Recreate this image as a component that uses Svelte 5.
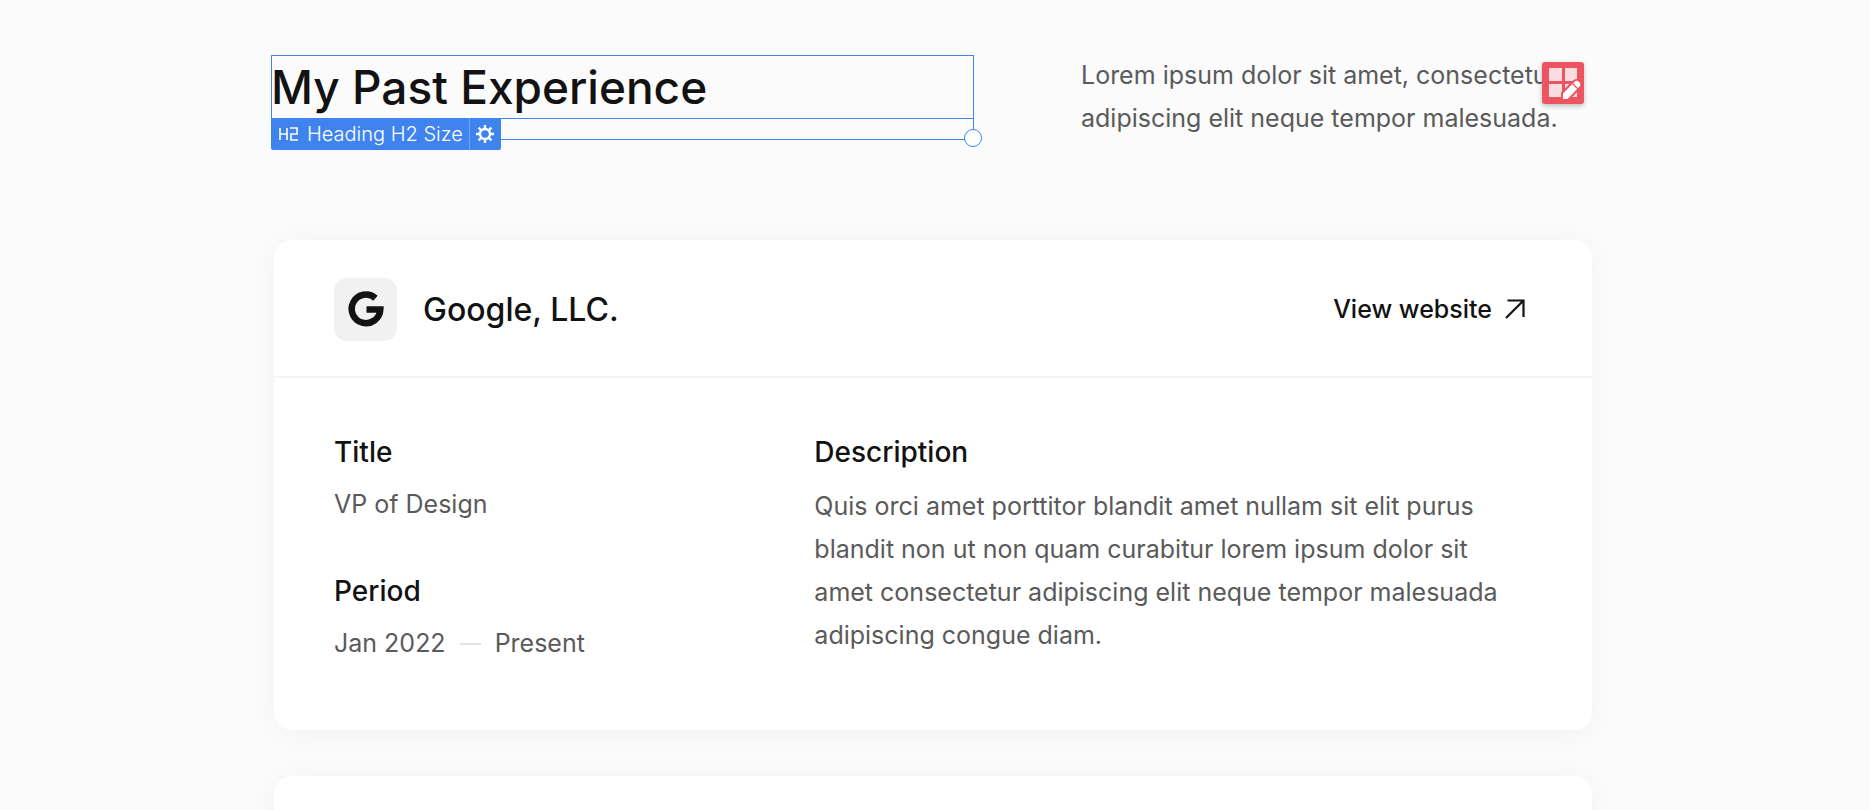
<script lang="ts">
  interface Job {
    company: string;
    title: string;
    from: string;
    to: string;
    description: string;
  }

  const jobs: Job[] = [
    {
      company: 'Google, LLC.',
      title: 'VP of Design',
      from: 'Jan 2022',
      to: 'Present',
      description:
        'Quis orci amet porttitor blandit amet nullam sit elit purus blandit non ut non quam curabitur lorem ipsum dolor sit amet consectetur adipiscing elit neque tempor malesuada adipiscing congue diam.',
    },
  ];
</script>

<main class="page">
  <header class="intro">
    <div class="selected">
      <h2>My Past Experience</h2>
      <div class="margin-outline"><span class="handle"></span></div>
      <div class="element-label">
        <span class="element-name">
          <svg width="20" height="14" viewBox="0 0 20 14" aria-hidden="true">
            <path d="M1 1v12M8 1v12M1 7h7M11 1h7v6h-6v6h7" />
          </svg>
          Heading H2 Size
        </span>
        <button class="settings" aria-label="Element settings">
          <svg width="20" height="20" viewBox="0 0 20 20" aria-hidden="true">
            <circle cx="10" cy="10" r="5" fill="none" stroke="#fff" stroke-width="2.4" />
            <path
              d="M10 1v4M10 15v4M1 10h4M15 10h4M3.6 3.6l2.9 2.9M13.5 13.5l2.9 2.9M16.4 3.6l-2.9 2.9M6.5 13.5l-2.9 2.9"
              stroke="#fff"
              stroke-width="2.4"
            />
          </svg>
        </button>
      </div>
    </div>

    <div class="summary">
      <p>Lorem ipsum dolor sit amet, consectetur adipiscing elit neque tempor malesuada.</p>
      <button class="edit" aria-label="Edit collection">
        <svg width="42" height="42" viewBox="0 0 42 42" aria-hidden="true">
          <path d="M7 6h13v13H7zM23 6h12v13H23zM7 22h13v13H7zM23 22h12v13H23z" fill="#fbdde0" />
          <path
            d="M20 38v-7l11.500-11.500a4 4 0 0 1 6.500 6L26 38z"
            fill="#fff"
            stroke="#eb5460"
            stroke-width="2"
            stroke-linejoin="round"
          />
          <path d="M30.500 21.500l5.500 5.500" stroke="#eb5460" stroke-width="1.2" />
        </svg>
      </button>
    </div>
  </header>

  <section class="jobs">
    {#each jobs as job}
      <article class="card">
        <div class="card-header">
          <span class="logo">
            <svg width="36" height="36" viewBox="0 0 36 36" aria-hidden="true">
              <path
                d="M27.500 7.200A14.300 14.300 0 1 0 32.300 18.600H18.500"
                fill="none"
                stroke="#121212"
                stroke-width="6.500"
              />
            </svg>
          </span>
          <h3>{job.company}</h3>
          <a class="website" href="#website">
            View website
            <svg width="20" height="20" viewBox="0 0 20 20" aria-hidden="true">
              <path d="M1 19L18.500 1.500M2.500 1.500h16v16.500" fill="none" stroke="#121212" stroke-width="2.200" />
            </svg>
          </a>
        </div>
        <div class="card-body">
          <div class="facts">
            <div>
              <h4>Title</h4>
              <p>{job.title}</p>
            </div>
            <div>
              <h4>Period</h4>
              <p class="period">{job.from}<span class="dash"></span>{job.to}</p>
            </div>
          </div>
          <div class="description">
            <h4>Description</h4>
            <p>{job.description}</p>
          </div>
        </div>
      </article>
    {/each}
    <article class="card next"></article>
  </section>
</main>

<style>
  :global(body) {
    margin: 0;
    background: #fbfbfb;
  }

  .page {
    box-sizing: border-box;
    height: 100vh;
    overflow: hidden;
    padding: 55px 24px 0 20px;
    font-family: Inter, sans-serif;
    font-size: 25px;
    line-height: 43px;
    color: #5a5a5a;
  }

  h2,
  h3,
  h4,
  p {
    margin: 0;
  }

  h2,
  h3,
  h4 {
    font-weight: 500;
    color: #121212;
  }

  .intro,
  .jobs {
    max-width: 1318px;
    margin: 0 auto;
  }

  .intro {
    display: grid;
    grid-template-columns: 700fr 511fr;
    column-gap: 107px;
    align-items: start;
    margin-bottom: 99px;
  }

  .selected {
    position: relative;
    margin-left: -3px;
    margin-bottom: 22px;
    outline: 1px solid #4084ee;
    outline-offset: -1px;
  }

  h2 {
    font-size: 46px;
    line-height: 64px;
  }

  .margin-outline {
    position: absolute;
    top: 100%;
    left: 0;
    right: 0;
    height: 21px;
    border: solid #4084ee;
    border-width: 0 1px 1px;
    box-sizing: border-box;
  }

  .handle {
    position: absolute;
    right: -9px;
    bottom: -8px;
    width: 18px;
    height: 18px;
    box-sizing: border-box;
    border: 1px solid #4084ee;
    border-radius: 50%;
    background: #fff;
  }

  .element-label {
    position: absolute;
    top: 63px;
    left: 0;
    display: flex;
    height: 32px;
    border-radius: 0 0 2px 2px;
    background: #3f83ee;
    color: #fff;
  }

  .element-name {
    display: flex;
    align-items: center;
    gap: 8px;
    padding: 0 6px 0 8px;
    font-size: 20px;
    font-weight: 300;
    line-height: 32px;
    white-space: nowrap;
  }

  .element-name path {
    fill: none;
    stroke: #fff;
    stroke-width: 1.6;
  }

  button {
    display: flex;
    align-items: center;
    justify-content: center;
    padding: 0;
    border: 0;
    cursor: pointer;
  }

  .settings {
    width: 32px;
    border-left: 1px solid #75a7f4;
    background: none;
  }

  .summary {
    position: relative;
    margin-top: -1px;
  }

  .edit {
    position: absolute;
    top: 8px;
    right: 8px;
    width: 42px;
    height: 42px;
    border-radius: 3px;
    background: #eb5460;
    box-shadow: 0 2px 5px rgba(0, 0, 0, 0.25);
  }

  .jobs {
    display: grid;
    gap: 46px;
  }

  .card {
    border-radius: 18px;
    background: #fff;
    box-shadow: 0 3px 30px rgba(0, 0, 0, 0.04);
  }

  .next {
    height: 490px;
  }

  .card-header {
    display: flex;
    align-items: center;
    gap: 26px;
    height: 134px;
    padding: 2px 67px 0 60px;
    border-bottom: 2px solid #f6f6f6;
  }

  .logo {
    display: flex;
    align-items: center;
    justify-content: center;
    width: 63px;
    height: 63px;
    border-radius: 13px;
    background: #f1f1f1;
  }

  h3 {
    font-size: 32px;
  }

  .website {
    display: flex;
    align-items: center;
    gap: 13px;
    margin-left: auto;
    color: #121212;
    font-weight: 500;
    text-decoration: none;
  }

  .card-body {
    display: grid;
    grid-template-columns: 420fr 717fr;
    column-gap: 60px;
    padding: 54px 60px 65px;
  }

  h4 {
    font-size: 28px;
    line-height: 40px;
  }

  .facts {
    display: grid;
    row-gap: 45px;
    align-content: start;
  }

  .facts p {
    margin-top: 11px;
  }

  .period {
    display: flex;
    align-items: center;
    gap: 14px;
  }

  .dash {
    width: 21px;
    height: 2px;
    background: #e3e3e3;
  }

  .description p {
    margin-top: 13px;
  }
</style>
